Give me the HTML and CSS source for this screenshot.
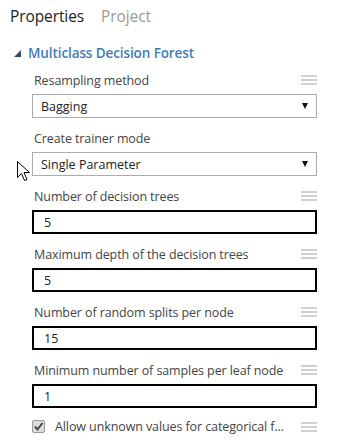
FILE: index.html
```html
<!DOCTYPE html>
<html lang="en">
    <head>
        <meta charset="UTF-8" />
        <meta name="viewport" content="width=device-width, initial-scale=1.0" />
        <title>Properties</title>
        <link rel="stylesheet" href="styles.css">
    </head>
    <body>
        <main class="panel">
            <div class="tabs">
                <span class="tab active">Properties</span>
                <span class="tab">Project</span>
            </div>
            <div class="section">
                <div class="section-title">
                    <span class="caret"></span>
                    Multiclass Decision Forest
                </div>
                <div class="fields">
                    <div class="field">
                        <div class="label-row">
                            <label>Resampling method</label>
                            <span class="grip"><i></i><i></i><i></i></span>
                        </div>
                        <div class="select">Bagging<span class="arrow"></span></div>
                    </div>
                    <div class="field">
                        <div class="label-row">
                            <label>Create trainer mode</label>
                        </div>
                        <div class="select">Single Parameter<span class="arrow"></span></div>
                    </div>
                    <div class="field">
                        <div class="label-row">
                            <label>Number of decision trees</label>
                            <span class="grip"><i></i><i></i><i></i></span>
                        </div>
                        <div class="input">5</div>
                    </div>
                    <div class="field">
                        <div class="label-row">
                            <label>Maximum depth of the decision trees</label>
                            <span class="grip"><i></i><i></i><i></i></span>
                        </div>
                        <div class="input">5</div>
                    </div>
                    <div class="field">
                        <div class="label-row">
                            <label>Number of random splits per node</label>
                            <span class="grip"><i></i><i></i><i></i></span>
                        </div>
                        <div class="input">15</div>
                    </div>
                    <div class="field">
                        <div class="label-row">
                            <label>Minimum number of samples per leaf node</label>
                            <span class="grip"><i></i><i></i><i></i></span>
                        </div>
                        <div class="input">1</div>
                    </div>
                    <div class="check-row">
                        <span class="checkbox">
                            <svg width="11" height="11" viewBox="0 0 11 11">
                                <path d="M2 5.5 L4.5 8.5 L9.5 2" fill="none" stroke="#444" stroke-width="2"/>
                            </svg>
                        </span>
                        <span class="check-label">Allow unknown values for categorical f...</span>
                        <span class="grip"><i></i><i></i><i></i></span>
                    </div>
                </div>
            </div>
            <svg class="cursor" width="13" height="21" viewBox="0 0 13 21">
                <path d="M0.5 0.5 L0.5 16.5 L4.5 12.5 L7.5 19.5 L10 18.5 L7 11.5 L12.5 11.5 Z" fill="#fff" stroke="#000" stroke-width="1"/>
            </svg>
        </main>
    </body>
</html>
```

FILE: styles.css
```css
body {
    margin: 0;
    background: #fff;
    font-family: "Open Sans", "Noto Sans", sans-serif;
    color: #333;
}
.panel {
    position: relative;
    width: 344px;
    height: 445px;
}
.tabs {
    display: flex;
    gap: 17px;
    padding: 3px 0 0 10px;
    height: 30px;
}
.tab {
    font-size: 15.5px;
    line-height: 26px;
    color: #9a9a9a;
    letter-spacing: -0.1px;
}
.tab.active {
    color: #222;
}
.section-title {
    display: flex;
    align-items: center;
    gap: 7px;
    padding: 10px 0 0 14px;
    font-size: 13.5px;
    font-weight: 600;
    color: #3f7cb8;
    line-height: 20px;
    letter-spacing: -0.1px;
}
.caret {
    width: 0;
    height: 0;
    border-left: 7px solid transparent;
    border-bottom: 7px solid #3a4a5a;
}
.fields {
    padding: 7px 27px 0 32px;
}
.field {
    margin-bottom: 10px;
}
.label-row {
    display: flex;
    justify-content: space-between;
    align-items: center;
    height: 20px;
    margin-bottom: 4px;
}
.label-row label {
    font-size: 12.5px;
    letter-spacing: -0.1px;
    color: #444;
    padding-left: 2px;
}
.grip {
    display: flex;
    flex-direction: column;
    gap: 2px;
    width: 16px;
}
.grip i {
    display: block;
    height: 2px;
    background: #d0d0d0;
}
.select {
    display: flex;
    justify-content: space-between;
    align-items: center;
    height: 24px;
    box-sizing: border-box;
    border: 1px solid #ababab;
    padding: 0 8px 0 8px;
    font-size: 12.5px;
    color: #222;
}
.arrow {
    width: 0;
    height: 0;
    border-left: 3px solid transparent;
    border-right: 3px solid transparent;
    border-top: 6px solid #111;
}
.input {
    height: 24px;
    box-sizing: border-box;
    border: 2px solid #000;
    padding: 2px 10px 0;
    font-size: 12.5px;
    line-height: 18px;
    color: #222;
}
.check-row {
    display: flex;
    align-items: center;
    gap: 10px;
    margin-top: 1px;
}
.checkbox {
    display: flex;
    align-items: center;
    justify-content: center;
    width: 13px;
    height: 13px;
    box-sizing: border-box;
    border: 1px solid #9a9a9a;
    background: #dcdcdc;
    border-radius: 2px;
    flex: none;
}
.check-label {
    flex: 1;
    font-size: 12.5px;
    letter-spacing: -0.1px;
    color: #444;
    white-space: nowrap;
}
.check-row .grip {
    flex: none;
}
.cursor {
    position: absolute;
    left: 17px;
    top: 161px;
}
```
